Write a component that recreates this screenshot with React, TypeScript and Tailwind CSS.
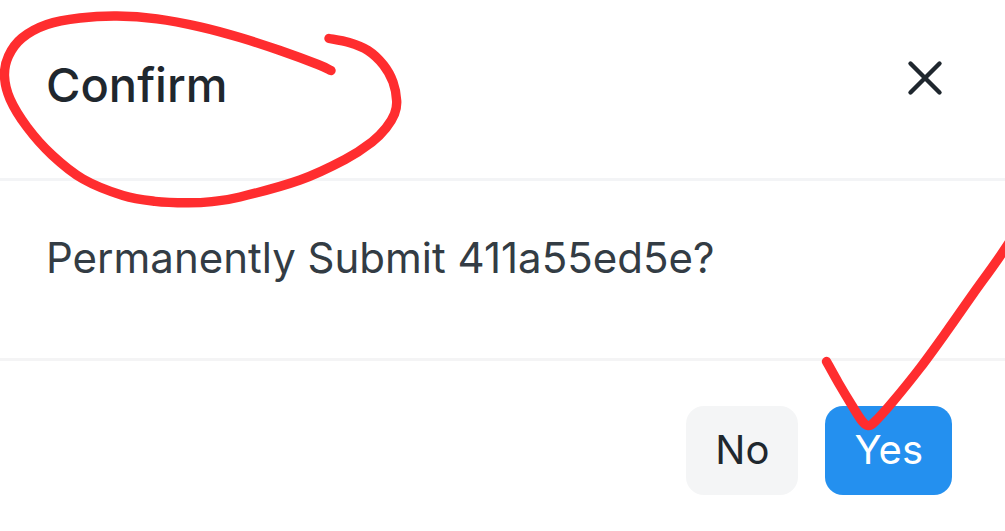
type Point = [number, number];

// Joins the points of a pen stroke with a smooth Catmull-Rom curve.
function strokePath(points: Point[]): string {
  let d = `M${points[0][0]} ${points[0][1]}`;
  for (let i = 0; i < points.length - 1; i++) {
    const before = points[Math.max(i - 1, 0)];
    const start = points[i];
    const end = points[i + 1];
    const after = points[Math.min(i + 2, points.length - 1)];
    d += `C${start[0] + (end[0] - before[0]) / 6} ${start[1] + (end[1] - before[1]) / 6}`;
    d += ` ${end[0] - (after[0] - start[0]) / 6} ${end[1] - (after[1] - start[1]) / 6}`;
    d += ` ${end[0]} ${end[1]}`;
  }
  return d;
}

const circleStroke: Point[] = [
  [331, 70.5], [318, 64.5], [280, 50.5], [240, 37.5], [200, 26.8], [157, 18.8], [117, 16], [80, 18],
  [47, 24.5], [22, 38], [8.5, 56], [4.5, 76], [10, 99], [27, 127], [52, 155], [83, 179],
  [123, 195.5], [155, 201.3], [187, 202.8], [212, 201.6], [240, 197], [300, 180], [345, 159.5], [372, 142],
  [386, 128], [394.5, 114], [396.7, 101], [393, 82], [383.5, 65], [368, 50.5], [349, 42.5], [329, 38.5],
];

const checkStroke: Point[] = [
  [826.5, 361.5], [838.5, 383], [852, 405.5], [862, 421], [868, 425.5], [875, 421.5], [893, 401.5],
  [920, 368], [947, 331], [973, 294], [996, 262], [1014, 235],
];

function CloseIcon() {
  return (
    <svg className="size-9" viewBox="0 0 36 36" fill="none" stroke="currentColor" strokeWidth="4.4" strokeLinecap="round" aria-hidden="true">
      <path d="M3.500 3.500 32.500 32.500M32.500 3.500 3.500 32.500" />
    </svg>
  );
}

function CircleMark() {
  return (
    <svg
      className="pointer-events-none absolute top-0 left-0 h-[216px] w-[410px]"
      viewBox="0 0 410 216"
      fill="none"
      stroke="#ff2d2f"
      strokeWidth="9.4"
      strokeLinecap="round"
      strokeLinejoin="round"
      aria-hidden="true"
    >
      <path d={strokePath(circleStroke)} />
    </svg>
  );
}

function CheckMark() {
  return (
    <svg
      className="pointer-events-none absolute right-0 bottom-[95px] h-[206px] w-[190px]"
      viewBox="815 230 190 206"
      fill="none"
      stroke="#ff2d2f"
      strokeWidth="9.4"
      strokeLinecap="round"
      strokeLinejoin="round"
      aria-hidden="true"
    >
      <path d={strokePath(checkStroke)} />
    </svg>
  );
}

export default function App() {
  return (
    <main className="relative overflow-hidden bg-white font-['Inter','Noto_Sans',sans-serif] text-[#1f272e]">
      <section role="dialog" aria-labelledby="dialog-title" aria-describedby="dialog-message">
        <header className="flex items-start justify-between border-b-3 border-[#f3f4f6] pt-[55px] pr-[62px] pb-[63px] pl-[46px]">
          <h1 id="dialog-title" className="text-[47px] leading-[60px] font-medium">
            Confirm
          </h1>
          <button type="button" aria-label="Close" className="mt-[5px]">
            <CloseIcon />
          </button>
        </header>
        <p id="dialog-message" className="border-b-3 border-[#f4f4f5] px-[46px] pt-[47px] pb-[70px] text-[42px] leading-[60px] text-[#333c44]">
          Permanently Submit 411a55ed5e?
        </p>
        <footer className="flex justify-end gap-[27px] px-[53px] pt-[45px] pb-9 text-[40px] leading-[60px]">
          <button type="button" className="rounded-[18px] bg-[#f4f5f6] px-[29px] pt-[14px] pb-[15px]">
            No
          </button>
          <button type="button" className="rounded-[18px] bg-[#2490ef] px-[29px] pt-[14px] pb-[15px] text-white">
            Yes
          </button>
        </footer>
      </section>
      <CircleMark />
      <CheckMark />
    </main>
  );
}
